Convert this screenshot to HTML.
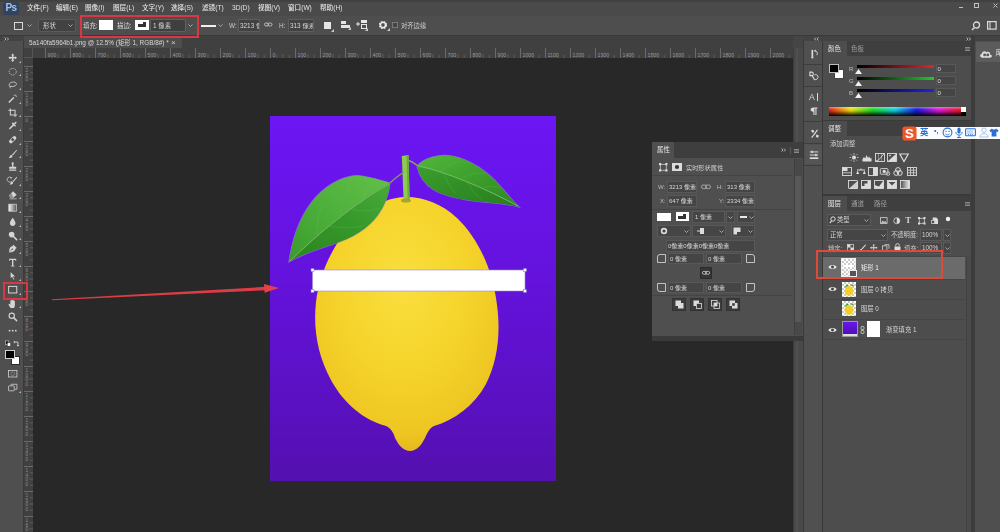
<!DOCTYPE html><html><head><meta charset="utf-8"><title>Photoshop</title><style>
*{box-sizing:border-box;margin:0;padding:0}
html,body{width:1000px;height:532px;overflow:hidden;background:#282828}
body{position:relative;font-family:"Liberation Sans","Noto Sans CJK SC",sans-serif;font-size:7px;color:#d6d6d6;line-height:1}
.a{position:absolute}
.t{position:absolute;white-space:nowrap;line-height:1;filter:blur(0.3px)}
.in{position:absolute;background:#3d3d3d;border:1px solid #5f5f5f;border-radius:1px}
svg{position:absolute;overflow:visible}
</style></head><body>
<div class="a" style="left:0px;top:0px;width:1000px;height:16px;background:#4a4a4a;"></div>
<div class="a" style="left:0px;top:0px;width:1000px;height:2px;background:#414141;"></div>
<div class="a" style="left:3px;top:2px;width:16px;height:13px;background:#34435c;border-radius:2px;"></div>
<div class="t" style="left:5.5px;top:3.2px;font-size:10px;color:#9cc4f4;font-weight:bold;letter-spacing:-0.6px">Ps</div>
<div class="t" style="left:27px;top:5.2px;font-size:6.6px;color:#e4e4e4;font-weight:500">文件(F)</div>
<div class="t" style="left:56px;top:5.2px;font-size:6.6px;color:#e4e4e4;font-weight:500">编辑(E)</div>
<div class="t" style="left:85px;top:5.2px;font-size:6.6px;color:#e4e4e4;font-weight:500">图像(I)</div>
<div class="t" style="left:113px;top:5.2px;font-size:6.6px;color:#e4e4e4;font-weight:500">图层(L)</div>
<div class="t" style="left:142px;top:5.2px;font-size:6.6px;color:#e4e4e4;font-weight:500">文字(Y)</div>
<div class="t" style="left:171px;top:5.2px;font-size:6.6px;color:#e4e4e4;font-weight:500">选择(S)</div>
<div class="t" style="left:202px;top:5.2px;font-size:6.6px;color:#e4e4e4;font-weight:500">滤镜(T)</div>
<div class="t" style="left:232px;top:5.2px;font-size:6.6px;color:#e4e4e4;font-weight:500">3D(D)</div>
<div class="t" style="left:258px;top:5.2px;font-size:6.6px;color:#e4e4e4;font-weight:500">视图(V)</div>
<div class="t" style="left:288px;top:5.2px;font-size:6.6px;color:#e4e4e4;font-weight:500">窗口(W)</div>
<div class="t" style="left:320px;top:5.2px;font-size:6.6px;color:#e4e4e4;font-weight:500">帮助(H)</div>
<div class="a" style="left:959px;top:7px;width:4px;height:1px;background:#c0c0c0;"></div>
<div class="a" style="left:974px;top:3px;width:5px;height:5px;border:1px solid #c0c0c0"></div>
<svg style="left:993px;top:3px" width="5" height="5"><path d="M0.5 0.5L4.5 4.5M4.5 0.5L0.5 4.5" stroke="#c0c0c0" stroke-width="0.9"/></svg>
<div class="a" style="left:0px;top:16px;width:1000px;height:20px;background:#4e4e4e;"></div>
<div class="a" style="left:0px;top:35px;width:1000px;height:1px;background:#3a3a3a;"></div>
<div class="a" style="left:14px;top:22px;width:9px;height:8px;border:1px solid #d8d8d8"></div>
<svg style="left:27px;top:24px" width="5" height="3"><path d="M0.5 0.5L2.5 2.5L4.5 0.5" stroke="#bbb" fill="none" stroke-width="0.8"/></svg>
<div class="in" style="left:38px;top:19px;width:38px;height:13px;background:#424242;border-color:#5a5a5a"></div>
<div class="t" style="left:43px;top:22.5px;font-size:6.4px;color:#d6d6d6;">形状</div>
<svg style="left:68px;top:24px" width="5" height="3"><path d="M0.5 0.5L2.5 2.5L4.5 0.5" stroke="#bbb" fill="none" stroke-width="0.8"/></svg>
<div class="t" style="left:83px;top:22.5px;font-size:6.4px;color:#d6d6d6;">填充:</div>
<div class="a" style="left:99px;top:20px;width:14px;height:10px;background:#ffffff;"></div>
<div class="t" style="left:117px;top:22.5px;font-size:6.4px;color:#d6d6d6;">描边:</div>
<div class="a" style="left:135px;top:20px;width:14px;height:10px;background:#fff"><div class="a" style="left:3px;top:4px;width:8px;height:3px;background:#333"></div><div class="a" style="left:8px;top:2px;width:3px;height:3px;background:#333"></div></div>
<div class="in" style="left:150px;top:19px;width:36px;height:13px;background:#3f3f3f"></div>
<div class="t" style="left:153px;top:22.5px;font-size:6.4px;color:#d6d6d6;">1 像素</div>
<svg style="left:188px;top:24px" width="5" height="3"><path d="M0.5 0.5L2.5 2.5L4.5 0.5" stroke="#bbb" fill="none" stroke-width="0.8"/></svg>
<div class="a" style="left:201px;top:25px;width:15px;height:2px;background:#f0f0f0;"></div>
<svg style="left:218px;top:24px" width="5" height="3"><path d="M0.5 0.5L2.5 2.5L4.5 0.5" stroke="#bbb" fill="none" stroke-width="0.8"/></svg>
<div class="t" style="left:229px;top:22.5px;font-size:6.4px;color:#c8c8c8;">W:</div>
<div class="in" style="left:238px;top:19px;width:22px;height:13px;background:#424242"></div>
<div class="t" style="left:240px;top:22.5px;font-size:6.4px;color:#d6d6d6;width:19px;overflow:hidden">3213 像</div>
<svg style="left:264px;top:22px" width="9" height="6"><rect x="0.5" y="1" width="4" height="3" rx="1.5" fill="none" stroke="#c8c8c8" stroke-width="0.9"/><rect x="4" y="1" width="4" height="3" rx="1.5" fill="none" stroke="#c8c8c8" stroke-width="0.9"/></svg>
<div class="t" style="left:279px;top:22.5px;font-size:6.4px;color:#c8c8c8;">H:</div>
<div class="in" style="left:288px;top:19px;width:26px;height:13px;background:#424242"></div>
<div class="t" style="left:290px;top:22.5px;font-size:6.4px;color:#d6d6d6;width:23px;overflow:hidden">313 像素</div>
<div class="a" style="left:324px;top:22px;width:7px;height:7px;background:#e6e6e6;"></div>
<svg style="left:331px;top:29px" width="3" height="3"><path d="M3 0V3H0Z" fill="#ccc"/></svg>
<svg style="left:341px;top:21px" width="10" height="9"><rect x="0" y="0" width="5" height="3" fill="#e6e6e6"/><rect x="0" y="4" width="9" height="3" fill="#e6e6e6"/><path d="M10 6V9H7Z" fill="#ccc"/></svg>
<svg style="left:356px;top:20px" width="12" height="11"><path d="M0 4H4M2 2V6" stroke="#e6e6e6" stroke-width="1"/><rect x="5" y="0" width="6" height="3" fill="#e6e6e6"/><rect x="5.5" y="4.5" width="5" height="4" fill="none" stroke="#e6e6e6"/><path d="M12 8V11H9Z" fill="#ccc"/></svg>
<svg style="left:378px;top:20px" width="12" height="11"><circle cx="5" cy="5" r="3" fill="none" stroke="#e6e6e6" stroke-width="2.2" stroke-dasharray="1.6 0.76"/><circle cx="5" cy="5" r="2.6" fill="none" stroke="#e6e6e6" stroke-width="1.4"/><path d="M12 8V11H9Z" fill="#ccc"/></svg>
<div class="a" style="left:392px;top:22px;width:6px;height:6px;border:1px solid #7a7a7a;background:#454545"></div>
<div class="t" style="left:401px;top:22.5px;font-size:6.3px;color:#d0d0d0;">对齐边缘</div>
<svg style="left:971px;top:21px" width="10" height="10"><circle cx="5.5" cy="4" r="3" fill="none" stroke="#dcdcdc" stroke-width="1.3"/><path d="M3.5 6.5L1 9" stroke="#dcdcdc" stroke-width="1.5"/></svg>
<svg style="left:987px;top:21px" width="10" height="9"><rect x="0.6" y="0.6" width="8.5" height="7.5" fill="none" stroke="#dcdcdc" stroke-width="1.2"/><path d="M3 0.6V8" stroke="#dcdcdc" stroke-width="1"/></svg>
<div class="a" style="left:0px;top:36px;width:1000px;height:12px;background:#404040;"></div>
<div class="a" style="left:24px;top:36px;width:158px;height:12px;background:#4d4d4d;"></div>
<div class="t" style="left:29px;top:40px;font-size:6.4px;color:#d8d8d8;">5a140fa5964b1.png @ 12.5% (矩形 1, RGB/8#) *</div>
<div class="t" style="left:171px;top:39px;font-size:8px;color:#cfcfcf;">×</div>
<div class="a" style="left:80px;top:15px;width:119px;height:23px;border:2px solid #d83844;"></div>
<div class="a" style="left:24px;top:48px;width:770px;height:10px;background:#404040;"></div>
<div class="a" style="left:24px;top:58px;width:9px;height:474px;background:#404040;"></div>
<div class="a" style="left:24px;top:48px;width:9px;height:10px;background:#404040;border-right:1px solid #555;border-bottom:1px solid #555"></div>
<svg style="left:0;top:0" width="1000" height="532"><path d="M45.5 48V58" stroke="#6a6a6a" stroke-width="1"/><text x="47.5" y="57" font-size="5.2" fill="#9c9c9c" font-family="Liberation Sans,sans-serif">900</text><path d="M51.8 55V58" stroke="#5c5c5c" stroke-width="1"/><path d="M58.0 54V58" stroke="#5c5c5c" stroke-width="1"/><path d="M64.2 55V58" stroke="#5c5c5c" stroke-width="1"/><path d="M70.5 48V58" stroke="#6a6a6a" stroke-width="1"/><text x="72.5" y="57" font-size="5.2" fill="#9c9c9c" font-family="Liberation Sans,sans-serif">800</text><path d="M76.8 55V58" stroke="#5c5c5c" stroke-width="1"/><path d="M83.0 54V58" stroke="#5c5c5c" stroke-width="1"/><path d="M89.2 55V58" stroke="#5c5c5c" stroke-width="1"/><path d="M95.5 48V58" stroke="#6a6a6a" stroke-width="1"/><text x="97.5" y="57" font-size="5.2" fill="#9c9c9c" font-family="Liberation Sans,sans-serif">700</text><path d="M101.8 55V58" stroke="#5c5c5c" stroke-width="1"/><path d="M108.0 54V58" stroke="#5c5c5c" stroke-width="1"/><path d="M114.2 55V58" stroke="#5c5c5c" stroke-width="1"/><path d="M120.5 48V58" stroke="#6a6a6a" stroke-width="1"/><text x="122.5" y="57" font-size="5.2" fill="#9c9c9c" font-family="Liberation Sans,sans-serif">600</text><path d="M126.8 55V58" stroke="#5c5c5c" stroke-width="1"/><path d="M133.0 54V58" stroke="#5c5c5c" stroke-width="1"/><path d="M139.2 55V58" stroke="#5c5c5c" stroke-width="1"/><path d="M145.5 48V58" stroke="#6a6a6a" stroke-width="1"/><text x="147.5" y="57" font-size="5.2" fill="#9c9c9c" font-family="Liberation Sans,sans-serif">500</text><path d="M151.8 55V58" stroke="#5c5c5c" stroke-width="1"/><path d="M158.0 54V58" stroke="#5c5c5c" stroke-width="1"/><path d="M164.2 55V58" stroke="#5c5c5c" stroke-width="1"/><path d="M170.5 48V58" stroke="#6a6a6a" stroke-width="1"/><text x="172.5" y="57" font-size="5.2" fill="#9c9c9c" font-family="Liberation Sans,sans-serif">400</text><path d="M176.8 55V58" stroke="#5c5c5c" stroke-width="1"/><path d="M183.0 54V58" stroke="#5c5c5c" stroke-width="1"/><path d="M189.2 55V58" stroke="#5c5c5c" stroke-width="1"/><path d="M195.5 48V58" stroke="#6a6a6a" stroke-width="1"/><text x="197.5" y="57" font-size="5.2" fill="#9c9c9c" font-family="Liberation Sans,sans-serif">300</text><path d="M201.8 55V58" stroke="#5c5c5c" stroke-width="1"/><path d="M208.0 54V58" stroke="#5c5c5c" stroke-width="1"/><path d="M214.2 55V58" stroke="#5c5c5c" stroke-width="1"/><path d="M220.5 48V58" stroke="#6a6a6a" stroke-width="1"/><text x="222.5" y="57" font-size="5.2" fill="#9c9c9c" font-family="Liberation Sans,sans-serif">200</text><path d="M226.8 55V58" stroke="#5c5c5c" stroke-width="1"/><path d="M233.0 54V58" stroke="#5c5c5c" stroke-width="1"/><path d="M239.2 55V58" stroke="#5c5c5c" stroke-width="1"/><path d="M245.5 48V58" stroke="#6a6a6a" stroke-width="1"/><text x="247.5" y="57" font-size="5.2" fill="#9c9c9c" font-family="Liberation Sans,sans-serif">100</text><path d="M251.8 55V58" stroke="#5c5c5c" stroke-width="1"/><path d="M258.0 54V58" stroke="#5c5c5c" stroke-width="1"/><path d="M264.2 55V58" stroke="#5c5c5c" stroke-width="1"/><path d="M270.5 48V58" stroke="#6a6a6a" stroke-width="1"/><text x="272.5" y="57" font-size="5.2" fill="#9c9c9c" font-family="Liberation Sans,sans-serif">0</text><path d="M276.8 55V58" stroke="#5c5c5c" stroke-width="1"/><path d="M283.0 54V58" stroke="#5c5c5c" stroke-width="1"/><path d="M289.2 55V58" stroke="#5c5c5c" stroke-width="1"/><path d="M295.5 48V58" stroke="#6a6a6a" stroke-width="1"/><text x="297.5" y="57" font-size="5.2" fill="#9c9c9c" font-family="Liberation Sans,sans-serif">100</text><path d="M301.8 55V58" stroke="#5c5c5c" stroke-width="1"/><path d="M308.0 54V58" stroke="#5c5c5c" stroke-width="1"/><path d="M314.2 55V58" stroke="#5c5c5c" stroke-width="1"/><path d="M320.5 48V58" stroke="#6a6a6a" stroke-width="1"/><text x="322.5" y="57" font-size="5.2" fill="#9c9c9c" font-family="Liberation Sans,sans-serif">200</text><path d="M326.8 55V58" stroke="#5c5c5c" stroke-width="1"/><path d="M333.0 54V58" stroke="#5c5c5c" stroke-width="1"/><path d="M339.2 55V58" stroke="#5c5c5c" stroke-width="1"/><path d="M345.5 48V58" stroke="#6a6a6a" stroke-width="1"/><text x="347.5" y="57" font-size="5.2" fill="#9c9c9c" font-family="Liberation Sans,sans-serif">300</text><path d="M351.8 55V58" stroke="#5c5c5c" stroke-width="1"/><path d="M358.0 54V58" stroke="#5c5c5c" stroke-width="1"/><path d="M364.2 55V58" stroke="#5c5c5c" stroke-width="1"/><path d="M370.5 48V58" stroke="#6a6a6a" stroke-width="1"/><text x="372.5" y="57" font-size="5.2" fill="#9c9c9c" font-family="Liberation Sans,sans-serif">400</text><path d="M376.8 55V58" stroke="#5c5c5c" stroke-width="1"/><path d="M383.0 54V58" stroke="#5c5c5c" stroke-width="1"/><path d="M389.2 55V58" stroke="#5c5c5c" stroke-width="1"/><path d="M395.5 48V58" stroke="#6a6a6a" stroke-width="1"/><text x="397.5" y="57" font-size="5.2" fill="#9c9c9c" font-family="Liberation Sans,sans-serif">500</text><path d="M401.8 55V58" stroke="#5c5c5c" stroke-width="1"/><path d="M408.0 54V58" stroke="#5c5c5c" stroke-width="1"/><path d="M414.2 55V58" stroke="#5c5c5c" stroke-width="1"/><path d="M420.5 48V58" stroke="#6a6a6a" stroke-width="1"/><text x="422.5" y="57" font-size="5.2" fill="#9c9c9c" font-family="Liberation Sans,sans-serif">600</text><path d="M426.8 55V58" stroke="#5c5c5c" stroke-width="1"/><path d="M433.0 54V58" stroke="#5c5c5c" stroke-width="1"/><path d="M439.2 55V58" stroke="#5c5c5c" stroke-width="1"/><path d="M445.5 48V58" stroke="#6a6a6a" stroke-width="1"/><text x="447.5" y="57" font-size="5.2" fill="#9c9c9c" font-family="Liberation Sans,sans-serif">700</text><path d="M451.8 55V58" stroke="#5c5c5c" stroke-width="1"/><path d="M458.0 54V58" stroke="#5c5c5c" stroke-width="1"/><path d="M464.2 55V58" stroke="#5c5c5c" stroke-width="1"/><path d="M470.5 48V58" stroke="#6a6a6a" stroke-width="1"/><text x="472.5" y="57" font-size="5.2" fill="#9c9c9c" font-family="Liberation Sans,sans-serif">800</text><path d="M476.8 55V58" stroke="#5c5c5c" stroke-width="1"/><path d="M483.0 54V58" stroke="#5c5c5c" stroke-width="1"/><path d="M489.2 55V58" stroke="#5c5c5c" stroke-width="1"/><path d="M495.5 48V58" stroke="#6a6a6a" stroke-width="1"/><text x="497.5" y="57" font-size="5.2" fill="#9c9c9c" font-family="Liberation Sans,sans-serif">900</text><path d="M501.8 55V58" stroke="#5c5c5c" stroke-width="1"/><path d="M508.0 54V58" stroke="#5c5c5c" stroke-width="1"/><path d="M514.2 55V58" stroke="#5c5c5c" stroke-width="1"/><path d="M520.5 48V58" stroke="#6a6a6a" stroke-width="1"/><text x="522.5" y="57" font-size="5.2" fill="#9c9c9c" font-family="Liberation Sans,sans-serif">1000</text><path d="M526.8 55V58" stroke="#5c5c5c" stroke-width="1"/><path d="M533.0 54V58" stroke="#5c5c5c" stroke-width="1"/><path d="M539.2 55V58" stroke="#5c5c5c" stroke-width="1"/><path d="M545.5 48V58" stroke="#6a6a6a" stroke-width="1"/><text x="547.5" y="57" font-size="5.2" fill="#9c9c9c" font-family="Liberation Sans,sans-serif">1100</text><path d="M551.8 55V58" stroke="#5c5c5c" stroke-width="1"/><path d="M558.0 54V58" stroke="#5c5c5c" stroke-width="1"/><path d="M564.2 55V58" stroke="#5c5c5c" stroke-width="1"/><path d="M570.5 48V58" stroke="#6a6a6a" stroke-width="1"/><text x="572.5" y="57" font-size="5.2" fill="#9c9c9c" font-family="Liberation Sans,sans-serif">1200</text><path d="M576.8 55V58" stroke="#5c5c5c" stroke-width="1"/><path d="M583.0 54V58" stroke="#5c5c5c" stroke-width="1"/><path d="M589.2 55V58" stroke="#5c5c5c" stroke-width="1"/><path d="M595.5 48V58" stroke="#6a6a6a" stroke-width="1"/><text x="597.5" y="57" font-size="5.2" fill="#9c9c9c" font-family="Liberation Sans,sans-serif">1300</text><path d="M601.8 55V58" stroke="#5c5c5c" stroke-width="1"/><path d="M608.0 54V58" stroke="#5c5c5c" stroke-width="1"/><path d="M614.2 55V58" stroke="#5c5c5c" stroke-width="1"/><path d="M620.5 48V58" stroke="#6a6a6a" stroke-width="1"/><text x="622.5" y="57" font-size="5.2" fill="#9c9c9c" font-family="Liberation Sans,sans-serif">1400</text><path d="M626.8 55V58" stroke="#5c5c5c" stroke-width="1"/><path d="M633.0 54V58" stroke="#5c5c5c" stroke-width="1"/><path d="M639.2 55V58" stroke="#5c5c5c" stroke-width="1"/><path d="M645.5 48V58" stroke="#6a6a6a" stroke-width="1"/><text x="647.5" y="57" font-size="5.2" fill="#9c9c9c" font-family="Liberation Sans,sans-serif">1500</text><path d="M651.8 55V58" stroke="#5c5c5c" stroke-width="1"/><path d="M658.0 54V58" stroke="#5c5c5c" stroke-width="1"/><path d="M664.2 55V58" stroke="#5c5c5c" stroke-width="1"/><path d="M670.5 48V58" stroke="#6a6a6a" stroke-width="1"/><text x="672.5" y="57" font-size="5.2" fill="#9c9c9c" font-family="Liberation Sans,sans-serif">1600</text><path d="M676.8 55V58" stroke="#5c5c5c" stroke-width="1"/><path d="M683.0 54V58" stroke="#5c5c5c" stroke-width="1"/><path d="M689.2 55V58" stroke="#5c5c5c" stroke-width="1"/><path d="M695.5 48V58" stroke="#6a6a6a" stroke-width="1"/><text x="697.5" y="57" font-size="5.2" fill="#9c9c9c" font-family="Liberation Sans,sans-serif">1700</text><path d="M701.8 55V58" stroke="#5c5c5c" stroke-width="1"/><path d="M708.0 54V58" stroke="#5c5c5c" stroke-width="1"/><path d="M714.2 55V58" stroke="#5c5c5c" stroke-width="1"/><path d="M720.5 48V58" stroke="#6a6a6a" stroke-width="1"/><text x="722.5" y="57" font-size="5.2" fill="#9c9c9c" font-family="Liberation Sans,sans-serif">1800</text><path d="M726.8 55V58" stroke="#5c5c5c" stroke-width="1"/><path d="M733.0 54V58" stroke="#5c5c5c" stroke-width="1"/><path d="M739.2 55V58" stroke="#5c5c5c" stroke-width="1"/><path d="M745.5 48V58" stroke="#6a6a6a" stroke-width="1"/><text x="747.5" y="57" font-size="5.2" fill="#9c9c9c" font-family="Liberation Sans,sans-serif">1900</text><path d="M751.8 55V58" stroke="#5c5c5c" stroke-width="1"/><path d="M758.0 54V58" stroke="#5c5c5c" stroke-width="1"/><path d="M764.2 55V58" stroke="#5c5c5c" stroke-width="1"/><path d="M770.5 48V58" stroke="#6a6a6a" stroke-width="1"/><text x="772.5" y="57" font-size="5.2" fill="#9c9c9c" font-family="Liberation Sans,sans-serif">2000</text><path d="M776.8 55V58" stroke="#5c5c5c" stroke-width="1"/><path d="M783.0 54V58" stroke="#5c5c5c" stroke-width="1"/><path d="M789.2 55V58" stroke="#5c5c5c" stroke-width="1"/><path d="M24 66.5H33" stroke="#6a6a6a" stroke-width="1"/><text x="25.5" y="72.0" font-size="4.6" fill="#8e8e8e" font-family="Liberation Sans,sans-serif">2</text><text x="25.5" y="76.6" font-size="4.6" fill="#8e8e8e" font-family="Liberation Sans,sans-serif">0</text><text x="25.5" y="81.2" font-size="4.6" fill="#8e8e8e" font-family="Liberation Sans,sans-serif">0</text><path d="M30 72.8H33" stroke="#5c5c5c" stroke-width="1"/><path d="M29 79.0H33" stroke="#5c5c5c" stroke-width="1"/><path d="M30 85.2H33" stroke="#5c5c5c" stroke-width="1"/><path d="M24 91.5H33" stroke="#6a6a6a" stroke-width="1"/><text x="25.5" y="97.0" font-size="4.6" fill="#8e8e8e" font-family="Liberation Sans,sans-serif">1</text><text x="25.5" y="101.6" font-size="4.6" fill="#8e8e8e" font-family="Liberation Sans,sans-serif">0</text><text x="25.5" y="106.2" font-size="4.6" fill="#8e8e8e" font-family="Liberation Sans,sans-serif">0</text><path d="M30 97.8H33" stroke="#5c5c5c" stroke-width="1"/><path d="M29 104.0H33" stroke="#5c5c5c" stroke-width="1"/><path d="M30 110.2H33" stroke="#5c5c5c" stroke-width="1"/><path d="M24 116.5H33" stroke="#6a6a6a" stroke-width="1"/><text x="25.5" y="122.0" font-size="4.6" fill="#8e8e8e" font-family="Liberation Sans,sans-serif">0</text><path d="M30 122.8H33" stroke="#5c5c5c" stroke-width="1"/><path d="M29 129.0H33" stroke="#5c5c5c" stroke-width="1"/><path d="M30 135.2H33" stroke="#5c5c5c" stroke-width="1"/><path d="M24 141.5H33" stroke="#6a6a6a" stroke-width="1"/><text x="25.5" y="147.0" font-size="4.6" fill="#8e8e8e" font-family="Liberation Sans,sans-serif">1</text><text x="25.5" y="151.6" font-size="4.6" fill="#8e8e8e" font-family="Liberation Sans,sans-serif">0</text><text x="25.5" y="156.2" font-size="4.6" fill="#8e8e8e" font-family="Liberation Sans,sans-serif">0</text><path d="M30 147.8H33" stroke="#5c5c5c" stroke-width="1"/><path d="M29 154.0H33" stroke="#5c5c5c" stroke-width="1"/><path d="M30 160.2H33" stroke="#5c5c5c" stroke-width="1"/><path d="M24 166.5H33" stroke="#6a6a6a" stroke-width="1"/><text x="25.5" y="172.0" font-size="4.6" fill="#8e8e8e" font-family="Liberation Sans,sans-serif">2</text><text x="25.5" y="176.6" font-size="4.6" fill="#8e8e8e" font-family="Liberation Sans,sans-serif">0</text><text x="25.5" y="181.2" font-size="4.6" fill="#8e8e8e" font-family="Liberation Sans,sans-serif">0</text><path d="M30 172.8H33" stroke="#5c5c5c" stroke-width="1"/><path d="M29 179.0H33" stroke="#5c5c5c" stroke-width="1"/><path d="M30 185.2H33" stroke="#5c5c5c" stroke-width="1"/><path d="M24 191.5H33" stroke="#6a6a6a" stroke-width="1"/><text x="25.5" y="197.0" font-size="4.6" fill="#8e8e8e" font-family="Liberation Sans,sans-serif">3</text><text x="25.5" y="201.6" font-size="4.6" fill="#8e8e8e" font-family="Liberation Sans,sans-serif">0</text><text x="25.5" y="206.2" font-size="4.6" fill="#8e8e8e" font-family="Liberation Sans,sans-serif">0</text><path d="M30 197.8H33" stroke="#5c5c5c" stroke-width="1"/><path d="M29 204.0H33" stroke="#5c5c5c" stroke-width="1"/><path d="M30 210.2H33" stroke="#5c5c5c" stroke-width="1"/><path d="M24 216.5H33" stroke="#6a6a6a" stroke-width="1"/><text x="25.5" y="222.0" font-size="4.6" fill="#8e8e8e" font-family="Liberation Sans,sans-serif">4</text><text x="25.5" y="226.6" font-size="4.6" fill="#8e8e8e" font-family="Liberation Sans,sans-serif">0</text><text x="25.5" y="231.2" font-size="4.6" fill="#8e8e8e" font-family="Liberation Sans,sans-serif">0</text><path d="M30 222.8H33" stroke="#5c5c5c" stroke-width="1"/><path d="M29 229.0H33" stroke="#5c5c5c" stroke-width="1"/><path d="M30 235.2H33" stroke="#5c5c5c" stroke-width="1"/><path d="M24 241.5H33" stroke="#6a6a6a" stroke-width="1"/><text x="25.5" y="247.0" font-size="4.6" fill="#8e8e8e" font-family="Liberation Sans,sans-serif">5</text><text x="25.5" y="251.6" font-size="4.6" fill="#8e8e8e" font-family="Liberation Sans,sans-serif">0</text><text x="25.5" y="256.2" font-size="4.6" fill="#8e8e8e" font-family="Liberation Sans,sans-serif">0</text><path d="M30 247.8H33" stroke="#5c5c5c" stroke-width="1"/><path d="M29 254.0H33" stroke="#5c5c5c" stroke-width="1"/><path d="M30 260.2H33" stroke="#5c5c5c" stroke-width="1"/><path d="M24 266.5H33" stroke="#6a6a6a" stroke-width="1"/><text x="25.5" y="272.0" font-size="4.6" fill="#8e8e8e" font-family="Liberation Sans,sans-serif">6</text><text x="25.5" y="276.6" font-size="4.6" fill="#8e8e8e" font-family="Liberation Sans,sans-serif">0</text><text x="25.5" y="281.2" font-size="4.6" fill="#8e8e8e" font-family="Liberation Sans,sans-serif">0</text><path d="M30 272.8H33" stroke="#5c5c5c" stroke-width="1"/><path d="M29 279.0H33" stroke="#5c5c5c" stroke-width="1"/><path d="M30 285.2H33" stroke="#5c5c5c" stroke-width="1"/><path d="M24 291.5H33" stroke="#6a6a6a" stroke-width="1"/><text x="25.5" y="297.0" font-size="4.6" fill="#8e8e8e" font-family="Liberation Sans,sans-serif">7</text><text x="25.5" y="301.6" font-size="4.6" fill="#8e8e8e" font-family="Liberation Sans,sans-serif">0</text><text x="25.5" y="306.2" font-size="4.6" fill="#8e8e8e" font-family="Liberation Sans,sans-serif">0</text><path d="M30 297.8H33" stroke="#5c5c5c" stroke-width="1"/><path d="M29 304.0H33" stroke="#5c5c5c" stroke-width="1"/><path d="M30 310.2H33" stroke="#5c5c5c" stroke-width="1"/><path d="M24 316.5H33" stroke="#6a6a6a" stroke-width="1"/><text x="25.5" y="322.0" font-size="4.6" fill="#8e8e8e" font-family="Liberation Sans,sans-serif">8</text><text x="25.5" y="326.6" font-size="4.6" fill="#8e8e8e" font-family="Liberation Sans,sans-serif">0</text><text x="25.5" y="331.2" font-size="4.6" fill="#8e8e8e" font-family="Liberation Sans,sans-serif">0</text><path d="M30 322.8H33" stroke="#5c5c5c" stroke-width="1"/><path d="M29 329.0H33" stroke="#5c5c5c" stroke-width="1"/><path d="M30 335.2H33" stroke="#5c5c5c" stroke-width="1"/><path d="M24 341.5H33" stroke="#6a6a6a" stroke-width="1"/><text x="25.5" y="347.0" font-size="4.6" fill="#8e8e8e" font-family="Liberation Sans,sans-serif">9</text><text x="25.5" y="351.6" font-size="4.6" fill="#8e8e8e" font-family="Liberation Sans,sans-serif">0</text><text x="25.5" y="356.2" font-size="4.6" fill="#8e8e8e" font-family="Liberation Sans,sans-serif">0</text><path d="M30 347.8H33" stroke="#5c5c5c" stroke-width="1"/><path d="M29 354.0H33" stroke="#5c5c5c" stroke-width="1"/><path d="M30 360.2H33" stroke="#5c5c5c" stroke-width="1"/><path d="M24 366.5H33" stroke="#6a6a6a" stroke-width="1"/><text x="25.5" y="372.0" font-size="4.6" fill="#8e8e8e" font-family="Liberation Sans,sans-serif">1</text><text x="25.5" y="376.6" font-size="4.6" fill="#8e8e8e" font-family="Liberation Sans,sans-serif">0</text><text x="25.5" y="381.2" font-size="4.6" fill="#8e8e8e" font-family="Liberation Sans,sans-serif">0</text><text x="25.5" y="385.8" font-size="4.6" fill="#8e8e8e" font-family="Liberation Sans,sans-serif">0</text><path d="M30 372.8H33" stroke="#5c5c5c" stroke-width="1"/><path d="M29 379.0H33" stroke="#5c5c5c" stroke-width="1"/><path d="M30 385.2H33" stroke="#5c5c5c" stroke-width="1"/><path d="M24 391.5H33" stroke="#6a6a6a" stroke-width="1"/><text x="25.5" y="397.0" font-size="4.6" fill="#8e8e8e" font-family="Liberation Sans,sans-serif">1</text><text x="25.5" y="401.6" font-size="4.6" fill="#8e8e8e" font-family="Liberation Sans,sans-serif">1</text><text x="25.5" y="406.2" font-size="4.6" fill="#8e8e8e" font-family="Liberation Sans,sans-serif">0</text><text x="25.5" y="410.8" font-size="4.6" fill="#8e8e8e" font-family="Liberation Sans,sans-serif">0</text><path d="M30 397.8H33" stroke="#5c5c5c" stroke-width="1"/><path d="M29 404.0H33" stroke="#5c5c5c" stroke-width="1"/><path d="M30 410.2H33" stroke="#5c5c5c" stroke-width="1"/><path d="M24 416.5H33" stroke="#6a6a6a" stroke-width="1"/><text x="25.5" y="422.0" font-size="4.6" fill="#8e8e8e" font-family="Liberation Sans,sans-serif">1</text><text x="25.5" y="426.6" font-size="4.6" fill="#8e8e8e" font-family="Liberation Sans,sans-serif">2</text><text x="25.5" y="431.2" font-size="4.6" fill="#8e8e8e" font-family="Liberation Sans,sans-serif">0</text><text x="25.5" y="435.8" font-size="4.6" fill="#8e8e8e" font-family="Liberation Sans,sans-serif">0</text><path d="M30 422.8H33" stroke="#5c5c5c" stroke-width="1"/><path d="M29 429.0H33" stroke="#5c5c5c" stroke-width="1"/><path d="M30 435.2H33" stroke="#5c5c5c" stroke-width="1"/><path d="M24 441.5H33" stroke="#6a6a6a" stroke-width="1"/><text x="25.5" y="447.0" font-size="4.6" fill="#8e8e8e" font-family="Liberation Sans,sans-serif">1</text><text x="25.5" y="451.6" font-size="4.6" fill="#8e8e8e" font-family="Liberation Sans,sans-serif">3</text><text x="25.5" y="456.2" font-size="4.6" fill="#8e8e8e" font-family="Liberation Sans,sans-serif">0</text><text x="25.5" y="460.8" font-size="4.6" fill="#8e8e8e" font-family="Liberation Sans,sans-serif">0</text><path d="M30 447.8H33" stroke="#5c5c5c" stroke-width="1"/><path d="M29 454.0H33" stroke="#5c5c5c" stroke-width="1"/><path d="M30 460.2H33" stroke="#5c5c5c" stroke-width="1"/><path d="M24 466.5H33" stroke="#6a6a6a" stroke-width="1"/><text x="25.5" y="472.0" font-size="4.6" fill="#8e8e8e" font-family="Liberation Sans,sans-serif">1</text><text x="25.5" y="476.6" font-size="4.6" fill="#8e8e8e" font-family="Liberation Sans,sans-serif">4</text><text x="25.5" y="481.2" font-size="4.6" fill="#8e8e8e" font-family="Liberation Sans,sans-serif">0</text><text x="25.5" y="485.8" font-size="4.6" fill="#8e8e8e" font-family="Liberation Sans,sans-serif">0</text><path d="M30 472.8H33" stroke="#5c5c5c" stroke-width="1"/><path d="M29 479.0H33" stroke="#5c5c5c" stroke-width="1"/><path d="M30 485.2H33" stroke="#5c5c5c" stroke-width="1"/><path d="M24 491.5H33" stroke="#6a6a6a" stroke-width="1"/><text x="25.5" y="497.0" font-size="4.6" fill="#8e8e8e" font-family="Liberation Sans,sans-serif">1</text><text x="25.5" y="501.6" font-size="4.6" fill="#8e8e8e" font-family="Liberation Sans,sans-serif">5</text><text x="25.5" y="506.2" font-size="4.6" fill="#8e8e8e" font-family="Liberation Sans,sans-serif">0</text><text x="25.5" y="510.8" font-size="4.6" fill="#8e8e8e" font-family="Liberation Sans,sans-serif">0</text><path d="M30 497.8H33" stroke="#5c5c5c" stroke-width="1"/><path d="M29 504.0H33" stroke="#5c5c5c" stroke-width="1"/><path d="M30 510.2H33" stroke="#5c5c5c" stroke-width="1"/><path d="M24 516.5H33" stroke="#6a6a6a" stroke-width="1"/><text x="25.5" y="522.0" font-size="4.6" fill="#8e8e8e" font-family="Liberation Sans,sans-serif">1</text><text x="25.5" y="526.6" font-size="4.6" fill="#8e8e8e" font-family="Liberation Sans,sans-serif">6</text><text x="25.5" y="531.2" font-size="4.6" fill="#8e8e8e" font-family="Liberation Sans,sans-serif">0</text><text x="25.5" y="535.8" font-size="4.6" fill="#8e8e8e" font-family="Liberation Sans,sans-serif">0</text><path d="M30 522.8H33" stroke="#5c5c5c" stroke-width="1"/><path d="M29 529.0H33" stroke="#5c5c5c" stroke-width="1"/></svg>
<div class="a" style="left:0px;top:36px;width:24px;height:496px;background:#4f4f4f;border-right:1px solid #3a3a3a"></div>
<div class="a" style="left:0px;top:36px;width:24px;height:5px;background:#434343;"></div>
<svg style="left:4px;top:37px" width="6" height="4"><path d="M0.5 0.5L2 2L0.5 3.5M3 0.5L4.5 2L3 3.5" stroke="#cfcfcf" fill="none" stroke-width="0.8"/></svg>
<svg style="left:7.8px;top:53.0px" width="9.4" height="9.4" viewBox="0 0 12 12"><path d="M6 0.5L8 3H7V5H9V4L11.5 6L9 8V7H7V9H8L6 11.5L4 9H5V7H3V8L0.5 6L3 4V5H5V3H4Z" fill="#d4d4d4"/></svg>
<svg style="left:19px;top:60.7px" width="2" height="2"><path d="M2 0V2H0Z" fill="#bdbdbd"/></svg>
<svg style="left:7.8px;top:66.7px" width="9.4" height="9.4" viewBox="0 0 12 12"><ellipse cx="6" cy="6" rx="4.6" ry="4.2" fill="none" stroke="#d4d4d4" stroke-width="1" stroke-dasharray="1.6 1"/></svg>
<svg style="left:19px;top:74.3px" width="2" height="2"><path d="M2 0V2H0Z" fill="#bdbdbd"/></svg>
<svg style="left:7.8px;top:80.3px" width="9.4" height="9.4" viewBox="0 0 12 12"><path d="M2.5 8.5C0.5 6.5 1.5 3.5 5.5 2.8C9.5 2.2 11.5 4 10.5 6C9.5 8 6 8.8 3.5 8C2 7.6 2.6 9.6 3.4 10.6" fill="none" stroke="#d4d4d4" stroke-width="1.1"/></svg>
<svg style="left:19px;top:88.0px" width="2" height="2"><path d="M2 0V2H0Z" fill="#bdbdbd"/></svg>
<svg style="left:7.8px;top:94.0px" width="9.4" height="9.4" viewBox="0 0 12 12"><path d="M1 11L7.5 4.5" stroke="#d4d4d4" stroke-width="1.8"/><path d="M9 0.5V2.5M11.5 3H9.8M10.8 1.2L9.8 2.2M7.2 1.5L8 2.3" stroke="#d4d4d4" stroke-width="0.9"/></svg>
<svg style="left:19px;top:101.7px" width="2" height="2"><path d="M2 0V2H0Z" fill="#bdbdbd"/></svg>
<svg style="left:7.8px;top:107.6px" width="9.4" height="9.4" viewBox="0 0 12 12"><path d="M3 0.5V9H11.5M0.5 3H9V11.5" fill="none" stroke="#d4d4d4" stroke-width="1.3"/></svg>
<svg style="left:19px;top:115.3px" width="2" height="2"><path d="M2 0V2H0Z" fill="#bdbdbd"/></svg>
<svg style="left:7.8px;top:121.3px" width="9.4" height="9.4" viewBox="0 0 12 12"><path d="M1 11L2 8.5L6.5 4L8 5.5L3.5 10Z" fill="#d4d4d4"/><path d="M6 3L9 6M7.5 4.5L10 2" stroke="#d4d4d4" stroke-width="2" stroke-linecap="round"/></svg>
<svg style="left:19px;top:128.9px" width="2" height="2"><path d="M2 0V2H0Z" fill="#bdbdbd"/></svg>
<svg style="left:7.8px;top:134.9px" width="9.4" height="9.4" viewBox="0 0 12 12"><g transform="rotate(-45 6 6)"><rect x="0.5" y="3.6" width="11" height="4.8" rx="2.2" fill="#d4d4d4"/><rect x="4.3" y="4.4" width="3.4" height="3.2" fill="#555"/></g></svg>
<svg style="left:19px;top:142.6px" width="2" height="2"><path d="M2 0V2H0Z" fill="#bdbdbd"/></svg>
<svg style="left:7.8px;top:148.6px" width="9.4" height="9.4" viewBox="0 0 12 12"><path d="M11 0.8L5 7.2L6.2 8.4L11.6 1.6Z" fill="#d4d4d4"/><path d="M4.5 7.8C3 7.8 2.4 9 2.2 10C1.8 11 1 11.2 0.6 11.2C2.5 12 5.6 11.2 5.8 9Z" fill="#d4d4d4"/></svg>
<svg style="left:19px;top:156.2px" width="2" height="2"><path d="M2 0V2H0Z" fill="#bdbdbd"/></svg>
<svg style="left:7.8px;top:162.2px" width="9.4" height="9.4" viewBox="0 0 12 12"><path d="M4.6 1.2C4.6 0 7.4 0 7.4 1.2C7.4 2.6 6.8 3.2 6.8 4.6V6H10.5V8.5H1.5V6H5.2V4.6C5.2 3.2 4.6 2.6 4.6 1.2Z" fill="#d4d4d4"/><rect x="1.5" y="9.6" width="9" height="1.6" fill="#d4d4d4"/></svg>
<svg style="left:19px;top:169.9px" width="2" height="2"><path d="M2 0V2H0Z" fill="#bdbdbd"/></svg>
<svg style="left:7.8px;top:175.9px" width="9.4" height="9.4" viewBox="0 0 12 12"><path d="M11 1L6 6.6L7 7.6L11.6 1.8Z" fill="#d4d4d4"/><path d="M5.5 7C4 7 3.6 8.2 3.4 9C3 10 2.4 10.4 1.8 10.4C3.6 11.4 6.4 10.6 6.6 8.2Z" fill="#d4d4d4"/><path d="M4.5 2.5A3.2 3.2 0 1 0 5 6" fill="none" stroke="#d4d4d4" stroke-width="0.9"/><path d="M3.6 0.8L5.4 2.6L3.2 3.4Z" fill="#d4d4d4"/></svg>
<svg style="left:19px;top:183.6px" width="2" height="2"><path d="M2 0V2H0Z" fill="#bdbdbd"/></svg>
<svg style="left:7.8px;top:189.5px" width="9.4" height="9.4" viewBox="0 0 12 12"><path d="M6.5 1.5L11 6L7 10H3.5L1 7.5Z" fill="#d4d4d4"/><path d="M1 7.5L3.5 10H7L4.2 4Z" fill="#8c8c8c"/><path d="M2 11.3H11" stroke="#d4d4d4" stroke-width="0.9"/></svg>
<svg style="left:19px;top:197.2px" width="2" height="2"><path d="M2 0V2H0Z" fill="#bdbdbd"/></svg>
<svg style="left:7.8px;top:203.2px" width="9.4" height="9.4" viewBox="0 0 12 12"><defs><linearGradient id="tg"><stop offset="0" stop-color="#f4f4f4"/><stop offset="1" stop-color="#555"/></linearGradient></defs><rect x="1" y="1.5" width="10" height="9" fill="url(#tg)" stroke="#d4d4d4" stroke-width="0.9"/></svg>
<svg style="left:19px;top:210.8px" width="2" height="2"><path d="M2 0V2H0Z" fill="#bdbdbd"/></svg>
<svg style="left:7.8px;top:216.8px" width="9.4" height="9.4" viewBox="0 0 12 12"><path d="M6 0.8C6 0.8 2.4 5.4 2.4 7.8A3.6 3.6 0 0 0 9.6 7.8C9.6 5.4 6 0.8 6 0.8Z" fill="#d4d4d4"/></svg>
<svg style="left:19px;top:224.5px" width="2" height="2"><path d="M2 0V2H0Z" fill="#bdbdbd"/></svg>
<svg style="left:7.8px;top:230.5px" width="9.4" height="9.4" viewBox="0 0 12 12"><circle cx="4.6" cy="4.6" r="3.6" fill="#d4d4d4"/><path d="M7 7L11 11" stroke="#d4d4d4" stroke-width="2" stroke-linecap="round"/></svg>
<svg style="left:19px;top:238.2px" width="2" height="2"><path d="M2 0V2H0Z" fill="#bdbdbd"/></svg>
<svg style="left:7.8px;top:244.1px" width="9.4" height="9.4" viewBox="0 0 12 12"><path d="M7 0.8L11.2 5L9.6 6.2C9.2 8.4 7.4 10 4.2 10.4L1 11L1.6 7.8C2 4.6 3.6 2.8 5.8 2.4Z" fill="#d4d4d4"/><circle cx="5.4" cy="6.6" r="1" fill="#555"/><path d="M1.2 10.8L5 7" stroke="#555" stroke-width="0.7"/></svg>
<svg style="left:19px;top:251.8px" width="2" height="2"><path d="M2 0V2H0Z" fill="#bdbdbd"/></svg>
<svg style="left:7.8px;top:257.8px" width="9.4" height="9.4" viewBox="0 0 12 12"><path d="M1.5 1H10.5V3.6H9.4V2.4H6.9V9.8H8.2V11H3.8V9.8H5.1V2.4H2.6V3.6H1.5Z" fill="#d4d4d4"/></svg>
<svg style="left:19px;top:265.4px" width="2" height="2"><path d="M2 0V2H0Z" fill="#bdbdbd"/></svg>
<svg style="left:7.8px;top:271.4px" width="9.4" height="9.4" viewBox="0 0 12 12"><path d="M3 0.8V10L5.2 7.8L6.8 11.4L8.4 10.6L6.8 7.2H9.8Z" fill="#d4d4d4" stroke="#333" stroke-width="0.5"/></svg>
<svg style="left:19px;top:279.1px" width="2" height="2"><path d="M2 0V2H0Z" fill="#bdbdbd"/></svg>
<svg style="left:7.8px;top:285.1px" width="9.4" height="9.4" viewBox="0 0 12 12"><rect x="0.8" y="1.8" width="10.4" height="8.4" fill="none" stroke="#d4d4d4" stroke-width="1.3"/></svg>
<svg style="left:19px;top:292.8px" width="2" height="2"><path d="M2 0V2H0Z" fill="#bdbdbd"/></svg>
<svg style="left:7.8px;top:298.7px" width="9.4" height="9.4" viewBox="0 0 12 12"><path d="M3.2 11.4C2.4 9.6 0.6 7.6 0.8 6.6C1.2 5.8 2.2 6.2 3 7.4V2.4C3 1.4 4.4 1.4 4.4 2.4V1.4C4.4 0.4 5.9 0.4 5.9 1.4V1.8C5.9 0.8 7.4 0.8 7.4 1.8V2.8C7.4 1.9 8.8 1.9 8.8 2.9V7.6C8.8 9.4 8.2 10.2 7.8 11.4Z" fill="#d4d4d4"/></svg>
<svg style="left:19px;top:306.4px" width="2" height="2"><path d="M2 0V2H0Z" fill="#bdbdbd"/></svg>
<svg style="left:7.8px;top:312.4px" width="9.4" height="9.4" viewBox="0 0 12 12"><circle cx="4.8" cy="4.8" r="3.4" fill="none" stroke="#d4d4d4" stroke-width="1.4"/><path d="M7.4 7.4L11 11" stroke="#d4d4d4" stroke-width="1.9" stroke-linecap="round"/></svg>
<svg style="left:7.8px;top:326.0px" width="9.4" height="9.4" viewBox="0 0 12 12"><circle cx="2" cy="6" r="1.15" fill="#d4d4d4"/><circle cx="6" cy="6" r="1.15" fill="#d4d4d4"/><circle cx="10" cy="6" r="1.15" fill="#d4d4d4"/></svg>
<svg style="left:7.8px;top:369.3px" width="9.4" height="9.4" viewBox="0 0 12 12"><rect x="0.6" y="1.8" width="10.8" height="8.4" fill="none" stroke="#d4d4d4" stroke-width="1"/><circle cx="6" cy="6" r="2.3" fill="none" stroke="#d4d4d4" stroke-width="0.8" stroke-dasharray="1 0.8"/></svg>
<svg style="left:7.8px;top:383.3px" width="9.4" height="9.4" viewBox="0 0 12 12"><rect x="0.6" y="3.6" width="7.4" height="6.4" rx="0.8" fill="#4f4f4f" stroke="#d4d4d4" stroke-width="1"/><path d="M4 3V1.6H11.4V8H8.6" fill="none" stroke="#d4d4d4" stroke-width="1"/></svg>
<svg style="left:19px;top:391.0px" width="2" height="2"><path d="M2 0V2H0Z" fill="#bdbdbd"/></svg>
<svg style="left:4.5px;top:339.5px" width="15" height="7.5" viewBox="0 0 16 8"><rect x="0.5" y="1" width="3.6" height="3.6" fill="#111" stroke="#ddd" stroke-width="0.6"/><rect x="2.4" y="3" width="3.6" height="3.6" fill="#fff" stroke="#222" stroke-width="0.5"/><path d="M10.5 2.2H13.8V5.6" fill="none" stroke="#dcdcdc" stroke-width="0.9"/><path d="M10.6 0.8L9 2.2L10.6 3.6ZM12.4 5.4L13.8 7L15.2 5.4Z" fill="#dcdcdc"/></svg>
<div class="a" style="left:10.5px;top:355.5px;width:9.5px;height:9px;background:#fff;border:1px solid #2b2b2b"></div>
<div class="a" style="left:5px;top:350px;width:9.5px;height:9px;background:#000;border:1px solid #cfcfcf"></div>
<div class="a" style="left:3px;top:282px;width:25px;height:18px;border:2px solid #d83844"></div>
<svg style="left:0;top:0" width="1000" height="532">
<defs>
<linearGradient id="pg" x1="0" y1="0" x2="0" y2="1"><stop offset="0" stop-color="#6c16f4"/><stop offset="0.45" stop-color="#6412dc"/><stop offset="1" stop-color="#5410b0"/></linearGradient>
<radialGradient id="lg" cx="0.48" cy="0.34" r="0.72"><stop offset="0" stop-color="#fadf3e"/><stop offset="0.5" stop-color="#f5d32a"/><stop offset="0.82" stop-color="#eec622"/><stop offset="1" stop-color="#dfae18"/></radialGradient>
<linearGradient id="lf1" x1="0" y1="1" x2="1" y2="0"><stop offset="0" stop-color="#2c8a22"/><stop offset="0.5" stop-color="#3fa32e"/><stop offset="1" stop-color="#57b83c"/></linearGradient>
<linearGradient id="lf2" x1="0" y1="0" x2="1" y2="1"><stop offset="0" stop-color="#4fb238"/><stop offset="0.6" stop-color="#37992a"/><stop offset="1" stop-color="#2a8420"/></linearGradient>
<linearGradient id="lf1a" x1="0" y1="1" x2="1" y2="0"><stop offset="0" stop-color="#3a9a2c"/><stop offset="0.45" stop-color="#4cae3a"/><stop offset="1" stop-color="#62c048"/></linearGradient>
<linearGradient id="lf1b" x1="0" y1="1" x2="1" y2="0"><stop offset="0" stop-color="#2a8420"/><stop offset="0.55" stop-color="#36982a"/><stop offset="1" stop-color="#48aa38"/></linearGradient>
<linearGradient id="lf2a" x1="0" y1="0" x2="1" y2="1"><stop offset="0" stop-color="#52b63c"/><stop offset="0.5" stop-color="#3c9e2c"/><stop offset="1" stop-color="#2c8822"/></linearGradient>
<linearGradient id="lf2b" x1="0" y1="0" x2="1" y2="1"><stop offset="0" stop-color="#3c9e2e"/><stop offset="0.6" stop-color="#2e8a24"/><stop offset="1" stop-color="#26801e"/></linearGradient>
</defs>
<rect x="270" y="116" width="286" height="365" fill="url(#pg)"/>
<!-- lemon body -->
<path d="M406 197 C 424 197 442 204 457 218 C 478 238 493 270 497 305 C 501 335 497 362 486 384 C 474 406 454 420 434 426 C 430 428 428 431 425 438 C 421 446 416 451 410 451 C 404 451 399 446 395 438 C 393 431 390 428 386 426 C 364 420 344 404 331 380 C 318 356 313 330 316 302 C 320 268 338 236 360 216 C 376 203 392 197 406 197 Z" fill="url(#lg)"/>
<!-- stem -->
<path d="M401.8 156 L408.5 155 L409.6 200.5 L403.6 200.5 Z" fill="#8ccc4e"/>
<path d="M406.5 155.4 L408.5 155 L409.6 200.5 L407.6 200.5 Z" fill="#6aae38"/>
<path d="M404 172 C 398 176 394 179 390 183" stroke="#8a9a6a" stroke-width="1.4" fill="none"/>
<path d="M407 160 C 411 161 414 163 418 166" stroke="#8a9a6a" stroke-width="1.4" fill="none"/>
<ellipse cx="406" cy="200.5" rx="5" ry="2" fill="#a9a32c"/>
<!-- left leaf -->
<path d="M289 262 C 292 240 300 215 316 197 C 330 182 348 174 362 176 C 374 178 384 181 390 183 C 389 192 386 204 378 215 C 368 229 352 238 334 244 C 316 250 300 255 289 262 Z" fill="none" stroke="#9a86d8" stroke-width="1.2" opacity="0.7"/>
<path d="M289 262 C 292 240 300 215 316 197 C 330 182 348 174 362 176 C 374 178 384 181 390 183 C 355 203 320 232 289 262 Z" fill="url(#lf1a)"/>
<path d="M289 262 C 320 232 355 203 390 183 C 389 192 386 204 378 215 C 368 229 352 238 334 244 C 316 250 300 255 289 262 Z" fill="url(#lf1b)"/>
<path d="M290 261 C 320 232 355 203 389 184" stroke="#86cf62" stroke-width="0.9" fill="none" opacity="0.85"/>
<path d="M318 236 C 316 224 318 212 324 202 M340 219 C 340 206 344 194 350 186 M362 203 C 364 194 368 186 374 181 M330 226 C 340 228 352 228 362 226 M352 209 C 362 212 372 211 380 208" stroke="#6cc050" stroke-width="0.5" fill="none" opacity="0.55"/>
<!-- right leaf -->
<path d="M417 166 C 424 158 438 154 452 156 C 470 159 488 172 500 186 C 508 195 514 202 519 207 C 508 204 496 203 482 202 C 464 200 446 197 434 190 C 424 184 419 175 417 166 Z" fill="none" stroke="#9a86d8" stroke-width="1.2" opacity="0.7"/>
<path d="M417 166 C 424 158 438 154 452 156 C 470 159 488 172 500 186 C 508 195 514 202 519 207 C 488 190 448 172 417 166 Z" fill="url(#lf2a)"/>
<path d="M417 166 C 448 172 488 190 519 207 C 508 204 496 203 482 202 C 464 200 446 197 434 190 C 424 184 419 175 417 166 Z" fill="url(#lf2b)"/>
<path d="M418 166 C 448 172 488 190 518 206" stroke="#86cf62" stroke-width="0.9" fill="none" opacity="0.85"/>
<path d="M440 171 C 446 166 454 162 462 161 M462 178 C 470 174 478 172 486 174 M484 188 C 490 186 496 186 502 189 M444 173 C 446 180 450 188 456 193 M468 182 C 470 188 476 196 482 199" stroke="#6cc050" stroke-width="0.5" fill="none" opacity="0.5"/>
<!-- white rectangle -->
<rect x="312.5" y="270" width="212.5" height="21" fill="#ffffff" stroke="#9a8ad0" stroke-width="0.6"/>
<rect x="311" y="268.5" width="3" height="3" fill="#fff" stroke="#7a6ac0" stroke-width="0.5"/>
<rect x="523.5" y="268.5" width="3" height="3" fill="#fff" stroke="#7a6ac0" stroke-width="0.5"/>
<rect x="311" y="289.5" width="3" height="3" fill="#fff" stroke="#7a6ac0" stroke-width="0.5"/>
<rect x="523.5" y="289.5" width="3" height="3" fill="#fff" stroke="#7a6ac0" stroke-width="0.5"/>
<!-- red arrow -->
<path d="M52 299.2 L266 286.8 L266 290.2 L52 300.2 Z" fill="#dc3c46"/>
<path d="M279 288 L264 284 L264.6 292.8 Z" fill="#e4404a"/>
</svg>

<div class="a" style="left:793px;top:36px;width:207px;height:496px;background:#454545;"></div>
<div class="a" style="left:793px;top:36px;width:10px;height:12px;background:#454545;"></div>
<div class="a" style="left:793px;top:48px;width:10px;height:484px;background:#494949;border-left:1px solid #3c3c3c"></div>
<div class="a" style="left:796px;top:48px;width:2px;height:484px;background:#505050;"></div>
<div class="a" style="left:803px;top:36px;width:20px;height:496px;background:#505050;border-left:1px solid #383838;border-right:1px solid #383838"></div>
<div class="a" style="left:803px;top:36px;width:20px;height:5px;background:#434343;"></div>
<svg style="left:814px;top:37px" width="6" height="4"><path d="M2 0.5L0.5 2L2 3.5M4.5 0.5L3 2L4.5 3.5" stroke="#cfcfcf" fill="none" stroke-width="0.8"/></svg>
<div class="a" style="left:804px;top:64px;width:18px;height:1px;background:#3d3d3d;"></div>
<div class="a" style="left:804px;top:86px;width:18px;height:1px;background:#3d3d3d;"></div>
<div class="a" style="left:804px;top:121px;width:18px;height:1px;background:#3d3d3d;"></div>
<div class="a" style="left:804px;top:143px;width:18px;height:1px;background:#3d3d3d;"></div>
<div class="a" style="left:804px;top:165px;width:18px;height:1px;background:#3d3d3d;"></div>
<svg style="left:809.5px;top:48.5px" width="9" height="10" viewBox="0 0 12 13"><rect x="2" y="1" width="2.2" height="9" fill="#dcdcdc"/><circle cx="3.1" cy="11" r="1.5" fill="#dcdcdc"/><path d="M6 2.2C9.5 2.2 10.5 5 9.2 8" fill="none" stroke="#dcdcdc" stroke-width="1.2"/><path d="M7.4 0.4V4L5.4 2.2Z" fill="#dcdcdc"/></svg>
<svg style="left:808.5px;top:70.5px" width="11" height="10" viewBox="0 0 14 13"><path d="M1 1.5V6H3.6C6 6 6 1.5 3.6 1.5ZM3.8 6L7 11" fill="none" stroke="#dcdcdc" stroke-width="1.4"/><path d="M7 5C10.5 4 12.5 6.5 11 9.5C10 11.5 7.5 11.8 6 10.5" fill="none" stroke="#dcdcdc" stroke-width="1.3"/></svg>
<div class="t" style="left:809px;top:92.5px;font-size:8.5px;color:#dcdcdc;">A</div>
<div class="a" style="left:816.5px;top:93px;width:1px;height:8px;background:#dcdcdc;"></div>
<svg style="left:810px;top:107px" width="8" height="8.5" viewBox="0 0 10 11"><path d="M5 0.5H9.5V2H8.2V10.5H6.8V2H5.6V10.5H4.2V6C1.6 6 0.6 4.8 0.6 3.2C0.6 1.6 2 0.5 5 0.5Z" fill="#dcdcdc"/></svg>
<svg style="left:809.5px;top:129px" width="9.5" height="9.5" viewBox="0 0 12 12"><path d="M2 11L6.5 5.5M9.5 1L5 7" stroke="#dcdcdc" stroke-width="1.5"/><path d="M1 2L4 1L5.5 3L3.5 5ZM8 7L11 8L10.5 11L7.5 10Z" fill="#dcdcdc"/></svg>
<div class="a" style="left:805px;top:145px;width:17px;height:19px;background:#555;"></div>
<svg style="left:809px;top:150px" width="10" height="10" viewBox="0 0 13 13"><path d="M1 2.5H12M1 6.5H12" stroke="#dcdcdc" stroke-width="1.2"/><rect x="3" y="1" width="2" height="3" fill="#dcdcdc"/><rect x="8" y="5" width="2" height="3" fill="#dcdcdc"/><rect x="1" y="9.5" width="11" height="2.2" fill="#dcdcdc"/></svg>
<div class="a" style="left:823px;top:36px;width:148px;height:5px;background:#434343;"></div>
<svg style="left:966px;top:37px" width="6" height="4"><path d="M0.5 0.5L2 2L0.5 3.5M3 0.5L4.5 2L3 3.5" stroke="#cfcfcf" fill="none" stroke-width="0.8"/></svg>
<div class="a" style="left:823px;top:41px;width:148px;height:491px;background:#3a3a3a;"></div>
<div class="a" style="left:823px;top:41px;width:148px;height:15px;background:#3f3f3f;"></div>
<div class="a" style="left:823px;top:41px;width:24px;height:15px;background:#4d4d4d;"></div>
<div class="t" style="left:828px;top:45.5px;font-size:6.5px;color:#e4e4e4;">颜色</div>
<div class="t" style="left:851px;top:45.5px;font-size:6.5px;color:#9e9e9e;">色板</div>
<svg style="left:965px;top:47px" width="5" height="4"><path d="M0 0.5H5M0 2H5M0 3.5H5" stroke="#9a9a9a" stroke-width="0.8"/></svg>
<div class="a" style="left:823px;top:56px;width:148px;height:64px;background:#4d4d4d;"></div>
<div class="a" style="left:834px;top:69px;width:10px;height:10px;background:#fff;border:1px solid #444"></div>
<div class="a" style="left:829px;top:64px;width:10px;height:9px;background:#000;border:1px solid #bdbdbd"></div>
<div class="t" style="left:849px;top:66px;font-size:6px;color:#bdbdbd;">R</div>
<div class="a" style="left:857px;top:65px;width:77px;height:3px;background:linear-gradient(90deg,#000,#e0242c);"></div>
<svg style="left:855px;top:69px" width="7" height="5"><path d="M3.5 0L7 5H0Z" fill="#f0f0f0"/></svg>
<div class="a" style="left:936px;top:64px;width:20px;height:9px;background:#454545;border:1px solid #585858"></div>
<div class="t" style="left:937.5px;top:66px;font-size:6px;color:#e0e0e0;">0</div>
<div class="t" style="left:849px;top:78px;font-size:6px;color:#bdbdbd;">G</div>
<div class="a" style="left:857px;top:77px;width:77px;height:3px;background:linear-gradient(90deg,#000,#22c62c);"></div>
<svg style="left:855px;top:81px" width="7" height="5"><path d="M3.5 0L7 5H0Z" fill="#f0f0f0"/></svg>
<div class="a" style="left:936px;top:76px;width:20px;height:9px;background:#454545;border:1px solid #585858"></div>
<div class="t" style="left:937.5px;top:78px;font-size:6px;color:#e0e0e0;">0</div>
<div class="t" style="left:849px;top:90px;font-size:6px;color:#bdbdbd;">B</div>
<div class="a" style="left:857px;top:89px;width:77px;height:3px;background:linear-gradient(90deg,#000,#2222e0);"></div>
<svg style="left:855px;top:93px" width="7" height="5"><path d="M3.5 0L7 5H0Z" fill="#f0f0f0"/></svg>
<div class="a" style="left:936px;top:88px;width:20px;height:9px;background:#454545;border:1px solid #585858"></div>
<div class="t" style="left:937.5px;top:90px;font-size:6px;color:#e0e0e0;">0</div>
<div class="a" style="left:829px;top:107px;width:137px;height:9px;background:linear-gradient(90deg,#e81818 0%,#e8e010 16%,#18d820 32%,#10d0e0 48%,#1818e0 64%,#e018d8 80%,#e81818 97%);"></div>
<div class="a" style="left:829px;top:107px;width:137px;height:9px;background:linear-gradient(180deg,rgba(255,255,255,0.4) 0%,rgba(255,255,255,0) 30%,rgba(0,0,0,0.1) 45%,rgba(0,0,0,0.98) 100%);"></div>
<div class="a" style="left:961px;top:107px;width:5px;height:5px;background:#fff;"></div>
<div class="a" style="left:961px;top:112px;width:5px;height:4px;background:#000;"></div>
<div class="a" style="left:823px;top:121px;width:148px;height:15px;background:#3f3f3f;"></div>
<div class="a" style="left:823px;top:121px;width:24px;height:15px;background:#4d4d4d;"></div>
<div class="t" style="left:828px;top:125.7px;font-size:6.5px;color:#e4e4e4;">调整</div>
<div class="a" style="left:823px;top:136px;width:148px;height:58px;background:#4d4d4d;"></div>
<div class="t" style="left:830px;top:141px;font-size:6.3px;color:#cfcfcf;">添加调整</div>
<svg style="left:849px;top:152.5px" width="10" height="9" viewBox="0 0 10 9"><circle cx="5" cy="4.5" r="2" fill="#dcdcdc"/><path d="M5 0V1.6M5 7.4V9M0.5 4.5H2M8 4.5H9.5M1.8 1.3L2.9 2.4M7.1 6.6L8.2 7.7M8.2 1.3L7.1 2.4M1.8 7.7L2.9 6.6" stroke="#dcdcdc" stroke-width="0.8"/></svg>
<svg style="left:862px;top:152.5px" width="10" height="9" viewBox="0 0 10 9"><path d="M0.5 8.5V6L2 4L3.2 5.5L4.5 2L6 5L7.2 3.5L8.4 5.5L9.5 5V8.5Z" fill="#dcdcdc"/></svg>
<svg style="left:874.5px;top:152.5px" width="10" height="9" viewBox="0 0 10 9"><rect x="0.5" y="0.5" width="9" height="8" fill="none" stroke="#dcdcdc" stroke-width="0.9"/><path d="M1 8C5 7.5 6 3 9 1" fill="none" stroke="#dcdcdc" stroke-width="0.9"/><path d="M3.5 0.5V8.5M6.5 0.5V8.5" stroke="#dcdcdc" stroke-width="0.4"/></svg>
<svg style="left:887px;top:152.5px" width="10" height="9" viewBox="0 0 10 9"><rect x="0.5" y="0.5" width="9" height="8" fill="none" stroke="#dcdcdc" stroke-width="0.9"/><path d="M0.5 8.5L9.5 0.5V8.5Z" fill="#dcdcdc"/><path d="M2 2.5H4M3 1.5V3.5" stroke="#dcdcdc" stroke-width="0.7"/></svg>
<svg style="left:899px;top:152.5px" width="10" height="9" viewBox="0 0 10 9"><path d="M0.8 1H9.2L5 8.5Z" fill="none" stroke="#dcdcdc" stroke-width="1.2"/></svg>
<svg style="left:842px;top:166.5px" width="10" height="9" viewBox="0 0 10 9"><rect x="0.5" y="0.5" width="9" height="8" fill="none" stroke="#dcdcdc" stroke-width="0.9"/><rect x="0.5" y="0.5" width="5" height="3.5" fill="#dcdcdc"/><path d="M0.5 5.8H9.5" stroke="#dcdcdc" stroke-width="0.8"/></svg>
<svg style="left:855.5px;top:166.5px" width="10" height="9" viewBox="0 0 10 9"><path d="M1 3H9" stroke="#dcdcdc" stroke-width="1"/><path d="M5 1.5V3" stroke="#dcdcdc" stroke-width="1"/><path d="M0.2 7L1.6 3.4L3.2 7ZM6.8 7L8.4 3.4L9.8 7Z" fill="#dcdcdc"/></svg>
<svg style="left:868px;top:166.5px" width="10" height="9" viewBox="0 0 10 9"><rect x="0.5" y="0.5" width="9" height="8" fill="none" stroke="#dcdcdc" stroke-width="0.9"/><rect x="5" y="0.5" width="4.5" height="8" fill="#dcdcdc"/></svg>
<svg style="left:880px;top:166.5px" width="10" height="9" viewBox="0 0 10 9"><rect x="0.3" y="1.6" width="7.6" height="5.6" rx="0.8" fill="none" stroke="#dcdcdc" stroke-width="0.9"/><circle cx="4.2" cy="4.4" r="1.7" fill="#dcdcdc"/><circle cx="8" cy="6.6" r="1.8" fill="none" stroke="#dcdcdc" stroke-width="0.8"/></svg>
<svg style="left:893px;top:166.5px" width="10" height="9" viewBox="0 0 10 9"><circle cx="5" cy="3" r="2.4" fill="none" stroke="#dcdcdc" stroke-width="1"/><circle cx="3.2" cy="6" r="2.4" fill="none" stroke="#dcdcdc" stroke-width="1"/><circle cx="6.8" cy="6" r="2.4" fill="none" stroke="#dcdcdc" stroke-width="1"/></svg>
<svg style="left:906.5px;top:166.5px" width="10" height="9" viewBox="0 0 10 9"><rect x="0.5" y="0.5" width="9" height="8" fill="none" stroke="#dcdcdc" stroke-width="0.9"/><path d="M3.5 0.5V8.5M6.5 0.5V8.5M0.5 3.2H9.5M0.5 5.8H9.5" stroke="#dcdcdc" stroke-width="0.8"/></svg>
<svg style="left:848px;top:180.0px" width="10" height="9" viewBox="0 0 10 9"><rect x="0.5" y="0.5" width="9" height="8" fill="none" stroke="#dcdcdc" stroke-width="0.9"/><path d="M0.5 8.5L9.5 0.5V8.5Z" fill="#dcdcdc" opacity="0.9"/><path d="M0.5 8.5L9.5 0.5" stroke="#4f4f4f" stroke-width="1"/></svg>
<svg style="left:861px;top:180.0px" width="10" height="9" viewBox="0 0 10 9"><rect x="0.5" y="0.5" width="9" height="8" fill="none" stroke="#dcdcdc" stroke-width="0.9"/><path d="M0.5 8.5V6H3.5V3.5H6.5V1H9.5V8.5Z" fill="#dcdcdc"/></svg>
<svg style="left:874px;top:180.0px" width="10" height="9" viewBox="0 0 10 9"><rect x="0.5" y="0.5" width="9" height="8" fill="none" stroke="#dcdcdc" stroke-width="0.9"/><path d="M0.5 8.5V5L5 6.5L9.5 0.5V8.5Z" fill="#dcdcdc"/></svg>
<svg style="left:887px;top:180.0px" width="10" height="9" viewBox="0 0 10 9"><rect x="0.5" y="0.5" width="9" height="8" fill="#dcdcdc" stroke="#dcdcdc" stroke-width="0.9"/><path d="M1.5 2L5 5.5L8.5 2Z" fill="#4f4f4f"/></svg>
<svg style="left:900px;top:180.0px" width="10" height="9" viewBox="0 0 10 9"><defs><linearGradient id="ag"><stop offset="0" stop-color="#4f4f4f"/><stop offset="1" stop-color="#eee"/></linearGradient></defs><rect x="0.5" y="0.5" width="9" height="8" fill="url(#ag)" stroke="#dcdcdc" stroke-width="0.9"/></svg>
<div class="a" style="left:823px;top:196px;width:148px;height:15px;background:#3f3f3f;"></div>
<div class="a" style="left:823px;top:196px;width:24px;height:15px;background:#4d4d4d;"></div>
<div class="t" style="left:828px;top:201px;font-size:6.5px;color:#e4e4e4;">图层</div>
<div class="t" style="left:851px;top:201px;font-size:6.5px;color:#9e9e9e;">通道</div>
<div class="t" style="left:874px;top:201px;font-size:6.5px;color:#9e9e9e;">路径</div>
<svg style="left:965px;top:202px" width="5" height="4"><path d="M0 0.5H5M0 2H5M0 3.5H5" stroke="#9a9a9a" stroke-width="0.8"/></svg>
<div class="a" style="left:823px;top:211px;width:148px;height:321px;background:#4d4d4d;"></div>
<div class="a" style="left:827px;top:214px;width:44px;height:12px;background:#454545;border:1px solid #5a5a5a"></div>
<svg style="left:829px;top:216px" width="7" height="8"><circle cx="4" cy="3" r="2.2" fill="none" stroke="#dcdcdc" stroke-width="1"/><path d="M2.6 4.8L0.8 7.2" stroke="#dcdcdc" stroke-width="1.1"/></svg>
<div class="t" style="left:837px;top:217px;font-size:6.3px;color:#d6d6d6;">类型</div>
<svg style="left:864px;top:219px" width="5" height="3"><path d="M0.5 0.5L2.5 2.5L4.5 0.5" stroke="#bbb" fill="none" stroke-width="0.8"/></svg>
<svg style="left:880px;top:216.5px" width="7.5" height="7.5" viewBox="0 0 9 9"><rect x="0.5" y="0.8" width="8" height="7" fill="none" stroke="#dcdcdc" stroke-width="0.9"/><path d="M1 7L3.4 4.4L5 6L6.4 4.8L8 7Z" fill="#dcdcdc"/></svg>
<svg style="left:893px;top:216.5px" width="7.5" height="7.5" viewBox="0 0 9 9"><circle cx="4.5" cy="4.5" r="3.6" fill="none" stroke="#dcdcdc" stroke-width="0.9"/><path d="M4.5 0.9A3.6 3.6 0 0 1 4.5 8.1Z" fill="#dcdcdc"/></svg>
<div class="t" style="left:905.5px;top:216.8px;font-size:8px;color:#dcdcdc;font-weight:bold;font-family:'Liberation Serif',serif">T</div>
<svg style="left:918px;top:216.5px" width="7.5" height="7.5" viewBox="0 0 9 9"><rect x="1.5" y="1.5" width="6" height="6" fill="none" stroke="#dcdcdc" stroke-width="0.9"/><rect x="0" y="0" width="2.4" height="2.4" fill="#dcdcdc"/><rect x="6.6" y="0" width="2.4" height="2.4" fill="#dcdcdc"/><rect x="0" y="6.6" width="2.4" height="2.4" fill="#dcdcdc"/><rect x="6.6" y="6.6" width="2.4" height="2.4" fill="#dcdcdc"/></svg>
<svg style="left:931px;top:216.5px" width="7.5" height="7.5" viewBox="0 0 9 9"><path d="M2 0.5H6.4L8.4 2.6V8.5H2Z" fill="#dcdcdc"/><rect x="0.4" y="4" width="4" height="3.6" fill="#4f4f4f" stroke="#dcdcdc" stroke-width="0.8"/></svg>
<svg style="left:945px;top:215.5px" width="6" height="6"><circle cx="3" cy="3" r="2.2" fill="#f0f0f0"/></svg>
<div class="a" style="left:827px;top:229px;width:61px;height:12px;background:#454545;border:1px solid #5a5a5a"></div>
<div class="t" style="left:830px;top:232px;font-size:6.3px;color:#d6d6d6;">正常</div>
<svg style="left:881px;top:234px" width="5" height="3"><path d="M0.5 0.5L2.5 2.5L4.5 0.5" stroke="#bbb" fill="none" stroke-width="0.8"/></svg>
<div class="t" style="left:891px;top:232px;font-size:6.3px;color:#cfcfcf;">不透明度:</div>
<div class="a" style="left:920px;top:229px;width:22px;height:12px;background:#454545;border:1px solid #5a5a5a"></div>
<div class="t" style="left:922px;top:232px;font-size:6.3px;color:#d6d6d6;">100%</div>
<div class="a" style="left:943px;top:229px;width:8px;height:12px;background:#454545;border:1px solid #5a5a5a"></div>
<svg style="left:944.5px;top:234px" width="5" height="3"><path d="M0.5 0.5L2.5 2.5L4.5 0.5" stroke="#bbb" fill="none" stroke-width="0.8"/></svg>
<div class="t" style="left:828px;top:245.6px;font-size:6.3px;color:#cfcfcf;">锁定:</div>
<svg style="left:846.5px;top:243.8px" width="7" height="7" viewBox="0 0 8 8"><rect x="0.5" y="0.5" width="7" height="7" fill="none" stroke="#dcdcdc" stroke-width="0.8"/><path d="M0.5 0.5H4V4H0.5ZM4 4H7.5V7.5H4Z" fill="#dcdcdc"/></svg>
<svg style="left:858.5px;top:243.8px" width="7" height="7" viewBox="0 0 8 8"><path d="M7.4 0.4L3 5L4 6L8 1Z" fill="#dcdcdc"/><path d="M2.6 5.4C1.4 5.6 1.4 7 0.4 7.6C2 8 3.6 7.4 3.6 6.2Z" fill="#dcdcdc"/></svg>
<svg style="left:869.5px;top:243.8px" width="7.5" height="7.5" viewBox="0 0 9 9"><path d="M4.5 0L6 1.8H5V4H7.2V3L9 4.5L7.2 6V5H5V7.2H6L4.5 9L3 7.2H4V5H1.8V6L0 4.5L1.8 3V4H4V1.8H3Z" fill="#dcdcdc"/></svg>
<svg style="left:881.5px;top:243.8px" width="7.5" height="7" viewBox="0 0 9 8"><rect x="0.5" y="2" width="5.4" height="5.4" fill="none" stroke="#dcdcdc" stroke-width="0.9"/><path d="M3 0.6H8.4V5.6" fill="none" stroke="#dcdcdc" stroke-width="0.9"/></svg>
<svg style="left:893.5px;top:242.8px" width="7" height="8" viewBox="0 0 8 9"><rect x="0.6" y="4" width="6.8" height="4.6" fill="#dcdcdc"/><path d="M2 4V2.6A2 2 0 0 1 6 2.6V4" fill="none" stroke="#dcdcdc" stroke-width="1"/></svg>
<div class="t" style="left:904px;top:245.6px;font-size:6.3px;color:#cfcfcf;">填充:</div>
<div class="a" style="left:920px;top:242px;width:22px;height:12px;background:#454545;border:1px solid #5a5a5a"></div>
<div class="t" style="left:922px;top:245px;font-size:6.3px;color:#d6d6d6;">100%</div>
<div class="a" style="left:943px;top:242px;width:8px;height:12px;background:#454545;border:1px solid #5a5a5a"></div>
<svg style="left:944.5px;top:247px" width="5" height="3"><path d="M0.5 0.5L2.5 2.5L4.5 0.5" stroke="#bbb" fill="none" stroke-width="0.8"/></svg>
<div class="a" style="left:823px;top:256px;width:142px;height:23px;background:#6b6b6b;"></div>
<div class="a" style="left:823px;top:256px;width:142px;height:1px;background:#464646;"></div>
<div class="a" style="left:823px;top:279px;width:142px;height:1px;background:#464646;"></div>
<div class="a" style="left:823px;top:299px;width:142px;height:1px;background:#464646;"></div>
<div class="a" style="left:823px;top:319px;width:142px;height:1px;background:#464646;"></div>
<div class="a" style="left:823px;top:339px;width:142px;height:1px;background:#464646;"></div>
<svg style="left:828px;top:264px" width="9" height="6" viewBox="0 0 9 6"><path d="M0.3 3C2 0.2 7 0.2 8.7 3C7 5.8 2 5.8 0.3 3Z" fill="#e6e6e6"/><circle cx="4.5" cy="3" r="1.5" fill="#444"/></svg>
<svg style="left:828px;top:286px" width="9" height="6" viewBox="0 0 9 6"><path d="M0.3 3C2 0.2 7 0.2 8.7 3C7 5.8 2 5.8 0.3 3Z" fill="#e6e6e6"/><circle cx="4.5" cy="3" r="1.5" fill="#444"/></svg>
<svg style="left:828px;top:326.5px" width="9" height="6" viewBox="0 0 9 6"><path d="M0.3 3C2 0.2 7 0.2 8.7 3C7 5.8 2 5.8 0.3 3Z" fill="#e6e6e6"/><circle cx="4.5" cy="3" r="1.5" fill="#444"/></svg>
<div class="a" style="left:841px;top:258px;width:15px;height:19px;background-color:#fff;background-image:linear-gradient(45deg,#ccc 25%,transparent 25%,transparent 75%,#ccc 75%),linear-gradient(45deg,#ccc 25%,transparent 25%,transparent 75%,#ccc 75%);background-size:4px 4px;background-position:0 0,2px 2px;border:1px solid #eee"></div>
<div class="a" style="left:843px;top:265px;width:11px;height:2px;background:#fff;"></div>
<div class="a" style="left:849px;top:270px;width:8px;height:7px;background:#555;border:1px solid #eee"></div>
<div class="t" style="left:861px;top:265px;font-size:6.3px;color:#f0f0f0;">矩形 1</div>
<div class="a" style="left:842px;top:281.5px;width:14px;height:15px;background-color:#fff;background-image:linear-gradient(45deg,#ccc 25%,transparent 25%,transparent 75%,#ccc 75%),linear-gradient(45deg,#ccc 25%,transparent 25%,transparent 75%,#ccc 75%);background-size:4px 4px;background-position:0 0,2px 2px;"></div>
<svg style="left:842px;top:281.5px" width="14" height="15"><ellipse cx="7" cy="9" rx="4.4" ry="5" fill="#f2cf2a"/><path d="M2 6L5 2.4L7 3.6ZM7.4 2.8L11 2.4L12 4.4Z" fill="#3c9a2c"/></svg>
<div class="a" style="left:842px;top:300.5px;width:14px;height:15px;background-color:#fff;background-image:linear-gradient(45deg,#ccc 25%,transparent 25%,transparent 75%,#ccc 75%),linear-gradient(45deg,#ccc 25%,transparent 25%,transparent 75%,#ccc 75%);background-size:4px 4px;background-position:0 0,2px 2px;"></div>
<svg style="left:842px;top:300.5px" width="14" height="15"><ellipse cx="7" cy="9" rx="4.4" ry="5" fill="#f2cf2a"/><path d="M2 6L5 2.4L7 3.6ZM7.4 2.8L11 2.4L12 4.4Z" fill="#3c9a2c"/></svg>
<div class="t" style="left:861px;top:287px;font-size:6.3px;color:#d6d6d6;">图层 0 拷贝</div>
<div class="t" style="left:861px;top:306px;font-size:6.3px;color:#d6d6d6;">图层 0</div>
<div class="a" style="left:842px;top:321px;width:16px;height:16px;background:linear-gradient(180deg,#6a14f0,#4a10a8);border:1px solid #999"></div>
<div class="a" style="left:843px;top:334px;width:14px;height:2px;background:#ddd;"></div>
<svg style="left:860px;top:326px" width="5" height="8" viewBox="0 0 5 8"><rect x="1" y="0.5" width="3" height="3" rx="1" fill="none" stroke="#dcdcdc" stroke-width="0.8"/><rect x="1" y="4.5" width="3" height="3" rx="1" fill="none" stroke="#dcdcdc" stroke-width="0.8"/></svg>
<div class="a" style="left:867px;top:321px;width:13px;height:16px;background:#fff;"></div>
<div class="t" style="left:886px;top:326.5px;font-size:6.3px;color:#d6d6d6;">渐变填充 1</div>
<div class="a" style="left:966px;top:256px;width:5px;height:276px;background:#4a4a4a;border-left:1px solid #424242"></div>
<div class="a" style="left:816px;top:250px;width:127px;height:29px;border:2px solid #dc4a3c"></div>
<div class="a" style="left:971px;top:36px;width:4px;height:496px;background:#3c3c3c;"></div>
<div class="a" style="left:975px;top:36px;width:25px;height:496px;background:#4f4f4f;"></div>
<div class="a" style="left:975px;top:36px;width:25px;height:5px;background:#434343;"></div>
<div class="a" style="left:976px;top:42px;width:24px;height:20px;background:#5c5c5c;"></div>
<svg style="left:979px;top:49px" width="14" height="10" viewBox="0 0 15 11"><path d="M3.5 9.5C0.6 9.5 0.2 5.8 3 5.2C3 2.6 6.4 1.4 8 3.6C10.4 2.2 12.6 4.2 11.8 6C14.6 6 14.6 9.5 12 9.5Z" fill="#dcdcdc"/><circle cx="6" cy="6.5" r="1.6" fill="#5a5a5a"/><circle cx="9.4" cy="6.5" r="1.6" fill="#5a5a5a"/></svg>
<div class="t" style="left:995.5px;top:50px;font-size:6.5px;color:#e4e4e4;">库</div>
<div class="a" style="left:903px;top:126.5px;width:97px;height:12.5px;background:#fafcff;border-radius:2px 0 0 2px"></div>
<svg style="left:902px;top:125.5px" width="15" height="15" viewBox="0 0 17 17"><rect x="0.5" y="0.5" width="16" height="16" rx="3.5" fill="#f0562a"/><text x="8.5" y="14" font-size="15" font-weight="bold" fill="#fff" text-anchor="middle" font-family="Liberation Sans,sans-serif">S</text></svg>
<div class="t" style="left:920px;top:128px;font-size:8.5px;color:#2b6fd6;font-weight:bold">英</div>
<div class="t" style="left:934px;top:127px;font-size:7px;color:#2b6fd6;font-weight:bold">•,</div>
<svg style="left:942px;top:127px" width="11" height="11" viewBox="0 0 11 11"><circle cx="5.5" cy="5.5" r="4.4" fill="none" stroke="#2b6fd6" stroke-width="1.1"/><circle cx="4" cy="4.4" r="0.7" fill="#2b6fd6"/><circle cx="7" cy="4.4" r="0.7" fill="#2b6fd6"/><path d="M3.4 6.8C4.6 8.2 6.4 8.2 7.6 6.8" fill="none" stroke="#2b6fd6" stroke-width="0.9"/></svg>
<svg style="left:955px;top:127px" width="8" height="11" viewBox="0 0 8 11"><rect x="2.4" y="0.5" width="3.2" height="6" rx="1.6" fill="#2b6fd6"/><path d="M0.8 5C0.8 9 7.2 9 7.2 5M4 8V10.5M2 10.5H6" fill="none" stroke="#2b6fd6" stroke-width="0.9"/></svg>
<svg style="left:965px;top:128px" width="11" height="9" viewBox="0 0 11 9"><rect x="0.6" y="0.8" width="9.8" height="7" rx="0.8" fill="none" stroke="#2b6fd6" stroke-width="1.1"/><path d="M2.4 3H8.6M2.4 5H8.6M3 6.6H8" stroke="#2b6fd6" stroke-width="0.8" stroke-dasharray="1.2 0.8"/></svg>
<svg style="left:979px;top:127px" width="10" height="11" viewBox="0 0 10 11"><circle cx="5" cy="3.2" r="2.2" fill="none" stroke="#a9c4ee" stroke-width="1"/><path d="M0.8 10C0.8 5.6 9.2 5.6 9.2 10Z" fill="none" stroke="#a9c4ee" stroke-width="1"/></svg>
<svg style="left:989px;top:128px" width="10" height="9" viewBox="0 0 10 9"><path d="M3 0.5L0.4 2.4L1.6 4.2L2.6 3.6V8.5H7.4V3.6L8.4 4.2L9.6 2.4L7 0.5C6.4 1.8 3.6 1.8 3 0.5Z" fill="#2b6fd6"/></svg>
<div class="a" style="left:652px;top:142px;width:151px;height:199px;background:#3a3a3a;"></div>
<div class="a" style="left:652px;top:142px;width:151px;height:16px;background:#3e3e3e;"></div>
<div class="a" style="left:652px;top:142px;width:22px;height:16px;background:#4f4f4f;"></div>
<div class="t" style="left:657px;top:147.2px;font-size:6.5px;color:#e4e4e4;">属性</div>
<svg style="left:781px;top:148px" width="6" height="4"><path d="M0.5 0.5L2 2L0.5 3.5M3 0.5L4.5 2L3 3.5" stroke="#cfcfcf" fill="none" stroke-width="0.8"/></svg>
<div class="a" style="left:790px;top:147px;width:1px;height:7px;background:#5a5a5a;"></div>
<svg style="left:794px;top:148.5px" width="5" height="4"><path d="M0 0.5H5M0 2H5M0 3.5H5" stroke="#a0a0a0" stroke-width="0.8"/></svg>
<div class="a" style="left:652px;top:158px;width:151px;height:178px;background:#4f4f4f;"></div>
<div class="a" style="left:794px;top:159px;width:8px;height:176px;background:#484848;border-left:1px solid #3f3f3f"></div>
<div class="a" style="left:795px;top:176px;width:6px;height:146px;background:#585858;"></div>
<svg style="left:659px;top:163px" width="8.5" height="8.5" viewBox="0 0 10 10"><rect x="1.5" y="1.5" width="7" height="7" fill="none" stroke="#dcdcdc" stroke-width="0.8"/><rect x="0" y="0" width="2.6" height="2.6" fill="#dcdcdc"/><rect x="7.4" y="0" width="2.6" height="2.6" fill="#dcdcdc"/><rect x="0" y="7.4" width="2.6" height="2.6" fill="#dcdcdc"/><rect x="7.4" y="7.4" width="2.6" height="2.6" fill="#dcdcdc"/></svg>
<svg style="left:672px;top:163px" width="10" height="8" viewBox="0 0 10 8"><rect x="0" y="0" width="10" height="8" fill="#dcdcdc"/><circle cx="5" cy="4" r="2.1" fill="#333"/></svg>
<div class="t" style="left:686px;top:164.8px;font-size:6.2px;color:#d0d0d0;">实时形状属性</div>
<div class="a" style="left:653px;top:175px;width:140px;height:1px;background:#444;"></div>
<div class="t" style="left:658px;top:184px;font-size:6px;color:#bdbdbd;">W:</div>
<div class="a" style="left:667px;top:181px;width:30px;height:12px;background:#454545;border:1px solid #585858"></div>
<div class="t" style="left:669px;top:184px;font-size:6.0px;color:#d6d6d6;">3213 像素</div>
<svg style="left:701px;top:184px" width="10" height="6" viewBox="0 0 10 6"><rect x="0.5" y="1" width="5" height="3.6" rx="1.8" fill="none" stroke="#b0b0b0" stroke-width="0.9"/><rect x="4.5" y="1" width="5" height="3.6" rx="1.8" fill="none" stroke="#b0b0b0" stroke-width="0.9"/></svg>
<div class="t" style="left:717px;top:184px;font-size:6px;color:#bdbdbd;">H:</div>
<div class="a" style="left:725px;top:181px;width:30px;height:12px;background:#454545;border:1px solid #585858"></div>
<div class="t" style="left:727px;top:184px;font-size:6.0px;color:#d6d6d6;">313 像素</div>
<div class="t" style="left:660px;top:198px;font-size:6px;color:#bdbdbd;">X:</div>
<div class="a" style="left:667px;top:195px;width:30px;height:12px;background:#454545;border:1px solid #585858"></div>
<div class="t" style="left:669px;top:198px;font-size:6.0px;color:#d6d6d6;">647 像素</div>
<div class="t" style="left:719px;top:198px;font-size:6px;color:#bdbdbd;">Y:</div>
<div class="a" style="left:725px;top:195px;width:30px;height:12px;background:#454545;border:1px solid #585858"></div>
<div class="t" style="left:727px;top:198px;font-size:6.0px;color:#d6d6d6;">2334 像素</div>
<div class="a" style="left:653px;top:209px;width:140px;height:1px;background:#444;"></div>
<div class="a" style="left:657px;top:213px;width:14px;height:8px;background:#fff;"></div>
<div class="a" style="left:676px;top:212px;width:13px;height:9px;background:#fff"><div class="a" style="left:2px;top:4px;width:8px;height:3px;background:#333"></div><div class="a" style="left:7px;top:2px;width:3px;height:3px;background:#333"></div></div>
<div class="a" style="left:692px;top:211px;width:33px;height:12px;background:#454545;border:1px solid #585858"></div>
<div class="t" style="left:695px;top:214px;font-size:6.0px;color:#d6d6d6;">1 像素</div>
<div class="a" style="left:726px;top:211px;width:9px;height:12px;background:#454545;border:1px solid #585858"></div>
<svg style="left:728px;top:216px" width="5" height="3"><path d="M0.5 0.5L2.5 2.5L4.5 0.5" stroke="#bbb" fill="none" stroke-width="0.8"/></svg>
<div class="a" style="left:737px;top:211px;width:18px;height:12px;background:#454545;border:1px solid #585858"></div>
<div class="a" style="left:740px;top:216px;width:7px;height:1.5px;background:#e8e8e8;"></div>
<svg style="left:749px;top:216px" width="5" height="3"><path d="M0.5 0.5L2.5 2.5L4.5 0.5" stroke="#bbb" fill="none" stroke-width="0.8"/></svg>
<div class="a" style="left:657px;top:225px;width:34px;height:12px;background:#454545;border:1px solid #585858"></div>
<svg style="left:660px;top:227px" width="8" height="8"><circle cx="4" cy="4" r="2.4" fill="none" stroke="#dcdcdc" stroke-width="1.6"/></svg>
<svg style="left:684px;top:230px" width="5" height="3"><path d="M0.5 0.5L2.5 2.5L4.5 0.5" stroke="#bbb" fill="none" stroke-width="0.8"/></svg>
<div class="a" style="left:692px;top:225px;width:34px;height:12px;background:#454545;border:1px solid #585858"></div>
<svg style="left:697px;top:227px" width="8" height="8"><path d="M0 4H3" stroke="#dcdcdc" stroke-width="1"/><rect x="3" y="1" width="4" height="6" fill="#dcdcdc"/></svg>
<svg style="left:719px;top:230px" width="5" height="3"><path d="M0.5 0.5L2.5 2.5L4.5 0.5" stroke="#bbb" fill="none" stroke-width="0.8"/></svg>
<div class="a" style="left:731px;top:225px;width:24px;height:12px;background:#454545;border:1px solid #585858"></div>
<svg style="left:733px;top:227px" width="8" height="8"><path d="M0.5 7.5V0.5H7.5V5H4V7.5Z" fill="#dcdcdc"/></svg>
<svg style="left:748px;top:230px" width="5" height="3"><path d="M0.5 0.5L2.5 2.5L4.5 0.5" stroke="#bbb" fill="none" stroke-width="0.8"/></svg>
<div class="a" style="left:666px;top:240px;width:89px;height:12px;background:#454545;border:1px solid #585858"></div>
<div class="t" style="left:668px;top:243px;font-size:6.0px;color:#d6d6d6;">0像素0像素0像素0像素</div>
<svg style="left:657px;top:254px" width="9" height="9" viewBox="0 0 9 9"><path d="M0.5 8.5V3A2.5 2.5 0 0 1 3 0.5H8.5V8.5Z" fill="none" stroke="#cfcfcf" stroke-width="0.9"/></svg>
<div class="a" style="left:668px;top:253px;width:36px;height:11px;background:#454545;border:1px solid #585858"></div>
<div class="t" style="left:670px;top:255.5px;font-size:6.0px;color:#d6d6d6;">0 像素</div>
<div class="a" style="left:706px;top:253px;width:36px;height:11px;background:#454545;border:1px solid #585858"></div>
<div class="t" style="left:708px;top:255.5px;font-size:6.0px;color:#d6d6d6;">0 像素</div>
<svg style="left:746px;top:254px" width="9" height="9" viewBox="0 0 9 9"><path d="M8.5 8.5V3A2.5 2.5 0 0 0 6 0.5H0.5V8.5Z" fill="none" stroke="#cfcfcf" stroke-width="0.9"/></svg>
<div class="a" style="left:700px;top:267px;width:12px;height:12px;background:#353535;border:1px solid #2c2c2c"></div>
<svg style="left:702px;top:270px" width="8" height="6" viewBox="0 0 10 6"><rect x="0.5" y="1" width="5" height="3.6" rx="1.8" fill="none" stroke="#d0d0d0" stroke-width="1"/><rect x="4.5" y="1" width="5" height="3.6" rx="1.8" fill="none" stroke="#d0d0d0" stroke-width="1"/></svg>
<svg style="left:657px;top:283px" width="9" height="9" viewBox="0 0 9 9"><path d="M0.5 0.5V6A2.5 2.5 0 0 0 3 8.5H8.5V0.5Z" fill="none" stroke="#cfcfcf" stroke-width="0.9"/></svg>
<div class="a" style="left:668px;top:282px;width:36px;height:11px;background:#454545;border:1px solid #585858"></div>
<div class="t" style="left:670px;top:284.5px;font-size:6.0px;color:#d6d6d6;">0 像素</div>
<div class="a" style="left:706px;top:282px;width:36px;height:11px;background:#454545;border:1px solid #585858"></div>
<div class="t" style="left:708px;top:284.5px;font-size:6.0px;color:#d6d6d6;">0 像素</div>
<svg style="left:746px;top:283px" width="9" height="9" viewBox="0 0 9 9"><path d="M8.5 0.5V6A2.5 2.5 0 0 1 6 8.5H0.5V0.5Z" fill="none" stroke="#cfcfcf" stroke-width="0.9"/></svg>
<div class="a" style="left:653px;top:295px;width:140px;height:1px;background:#444;"></div>
<div class="a" style="left:672px;top:298px;width:14px;height:13px;background:#3c3c3c;border:1px solid #333"></div>
<svg style="left:674.5px;top:300px" width="9" height="9" viewBox="0 0 9 9"><rect x="0.5" y="0.5" width="5.5" height="5.5" fill="#dcdcdc"/><rect x="3" y="3" width="5.5" height="5.5" fill="#dcdcdc"/></svg>
<div class="a" style="left:690px;top:298px;width:14px;height:13px;background:#3c3c3c;border:1px solid #333"></div>
<svg style="left:692.5px;top:300px" width="9" height="9" viewBox="0 0 9 9"><path d="M0.5 0.5H6V3H3V6H0.5Z" fill="#dcdcdc"/><rect x="3.4" y="3.4" width="5" height="5" fill="none" stroke="#dcdcdc" stroke-width="0.8"/></svg>
<div class="a" style="left:708px;top:298px;width:14px;height:13px;background:#3c3c3c;border:1px solid #333"></div>
<svg style="left:710.5px;top:300px" width="9" height="9" viewBox="0 0 9 9"><rect x="0.5" y="0.5" width="5.5" height="5.5" fill="none" stroke="#dcdcdc" stroke-width="0.8"/><rect x="3" y="3" width="5.5" height="5.5" fill="none" stroke="#dcdcdc" stroke-width="0.8"/><rect x="3" y="3" width="3" height="3" fill="#dcdcdc"/></svg>
<div class="a" style="left:726px;top:298px;width:14px;height:13px;background:#3c3c3c;border:1px solid #333"></div>
<svg style="left:728.5px;top:300px" width="9" height="9" viewBox="0 0 9 9"><path d="M0.5 0.5H6V3H8.5V8.5H3V6H0.5Z" fill="#dcdcdc"/><rect x="3.2" y="3.2" width="2.6" height="2.6" fill="#3c3c3c"/></svg>
</body></html>
